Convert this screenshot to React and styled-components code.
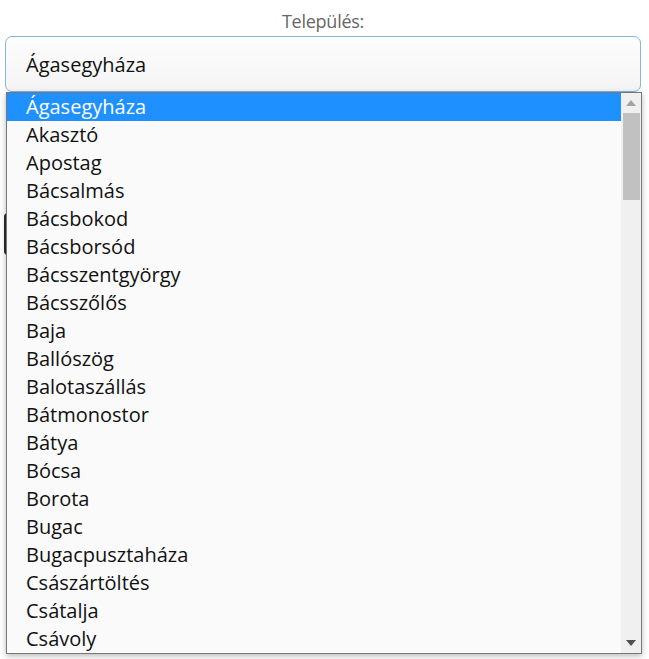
import React from 'react';
import styled, { createGlobalStyle } from 'styled-components';

const GlobalStyle = createGlobalStyle`
  html, body {
    margin: 0;
    padding: 0;
    background: #fff;
    font-family: 'Open Sans', 'Noto Sans', sans-serif;
  }
`;

const towns = [
  'Ágasegyháza',
  'Akasztó',
  'Apostag',
  'Bácsalmás',
  'Bácsbokod',
  'Bácsborsód',
  'Bácsszentgyörgy',
  'Bácsszőlős',
  'Baja',
  'Ballószög',
  'Balotaszállás',
  'Bátmonostor',
  'Bátya',
  'Bócsa',
  'Borota',
  'Bugac',
  'Bugacpusztaháza',
  'Császártöltés',
  'Csátalja',
  'Csávoly',
];

const Page = styled.div`
  position: relative;
  height: 659px;
  padding: 0 8px 0 5px;
  overflow: hidden;
`;

const Label = styled.div`
  padding-top: 10px;
  margin-bottom: 4px;
  line-height: 22px;
  font-size: 18px;
  letter-spacing: -0.25px;
  color: #666;
  text-align: center;
`;

const SelectBox = styled.div`
  height: 54px;
  display: flex;
  align-items: center;
  padding-left: 20px;
  border: 1px solid #86b2e6;
  border-radius: 7px;
  background: linear-gradient(#fdfdfd, #f4f4f4);
  font-size: 20px;
  color: #111;
`;

const DarkButton = styled.div`
  width: 200px;
  height: 42px;
  margin: 121px 0 0 -1px;
  border-radius: 4px;
  background: #2b2b2b;
`;

const Dropdown = styled.div`
  position: absolute;
  top: 92px;
  left: 6px;
  width: 634px;
  height: 560px;
  display: flex;
  border: 1px solid #777;
  background: #fafafa;
  box-shadow: 0 2px 6px rgba(0, 0, 0, 0.28);
`;

const Options = styled.div`
  flex: 1;
  overflow: hidden;
`;

const Option = styled.div`
  height: 28px;
  line-height: 28px;
  padding-left: 19px;
  font-size: 20px;
  color: ${props => (props.selected ? '#fff' : '#111')};
  background: ${props => (props.selected ? '#1e90ff' : 'transparent')};
  white-space: nowrap;
`;

const Scrollbar = styled.div`
  width: 20px;
  display: flex;
  flex-direction: column;
  align-items: center;
  background: #f0f0f0;
`;

const Arrow = styled.div`
  height: 20px;
  display: flex;
  align-items: center;
  justify-content: center;
`;

const Track = styled.div`
  flex: 1;
  width: 100%;
`;

const Thumb = styled.div`
  width: 17px;
  height: 87px;
  margin-left: 2px;
  background: #c1c1c1;
`;

const Triangle = ({ up, color }) => (
  <svg width="10" height="6" viewBox="0 0 10 6">
    <polygon points={up ? '0,6 10,6 5,0' : '0,0 10,0 5,6'} fill={color} />
  </svg>
);

export default function App() {
  return (
    <Page>
      <GlobalStyle />
      <Label>Település:</Label>
      <SelectBox>Ágasegyháza</SelectBox>
      <DarkButton />
      <Dropdown>
        <Options>
          {towns.map((town, i) => (
            <Option key={town} selected={i === 0}>
              {town}
            </Option>
          ))}
        </Options>
        <Scrollbar>
          <Arrow>
            <Triangle up color="#a3a3a3" />
          </Arrow>
          <Track>
            <Thumb />
          </Track>
          <Arrow>
            <Triangle color="#505050" />
          </Arrow>
        </Scrollbar>
      </Dropdown>
    </Page>
  );
}
